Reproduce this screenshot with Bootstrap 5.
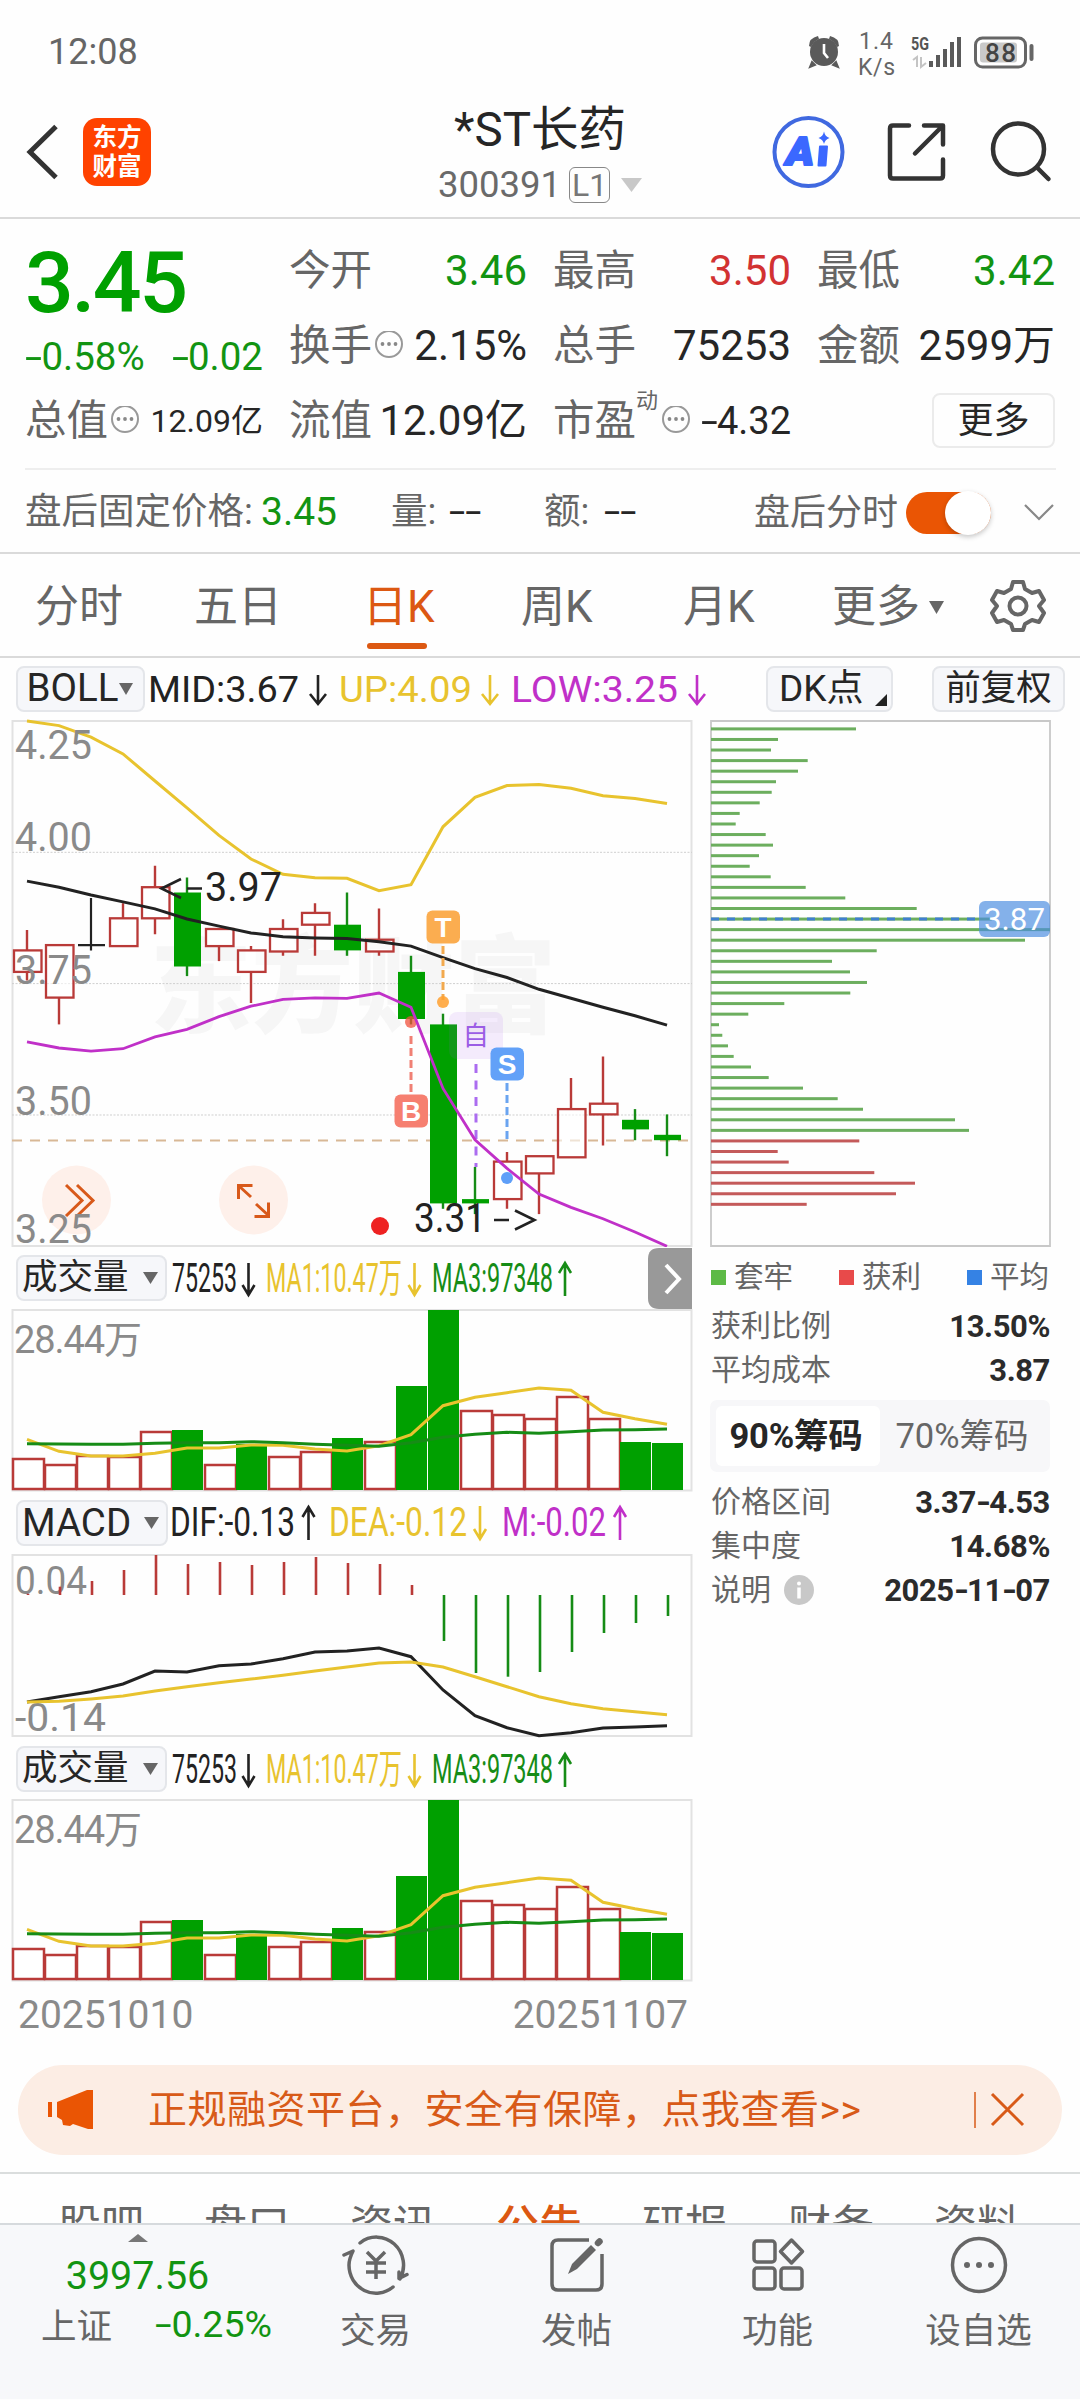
<!DOCTYPE html>
<html lang="zh-CN">
<head>
<meta charset="utf-8">
<meta name="viewport" content="width=device-width, initial-scale=1">
<title>*ST长药 300391</title>
<link rel="stylesheet" href="https://cdn.jsdelivr.net/npm/bootstrap@5.3.0/dist/css/bootstrap.min.css">
<style>
body{font-family:Roboto,"Noto Sans CJK SC",sans-serif;color:#262626;background:#fefefe;width:1080px;height:2400px;overflow:hidden;line-height:1}
.nw{white-space:nowrap}
.g6{color:#666}.up{color:#d23232}.dn{color:#129412}.or{color:#dc5812}
svg text{font-family:Roboto,"Noto Sans CJK SC",sans-serif}
.hy{display:inline-block;transform:scaleX(1.6);transform-origin:0 50%;margin-right:.15em}
.status{height:104px;padding:0 44px 0 48px}
.clock{font-size:36px;color:#666;letter-spacing:0}
.titlebar{height:115px;border-bottom:2px solid #dadada;padding-bottom:17px;display:grid;grid-template-columns:1fr auto 1fr;grid-template-rows:95px}
.logo{width:68px;height:68px;border-radius:14px;background:#ff4200;color:#fff;font-weight:700;font-size:24.5px;line-height:29px}
.stk{font-size:47.5px;line-height:46px}
.code{font-size:36.5px;color:#6a6a6a;line-height:38px}
.lv{border:1.5px solid #888;border-radius:6px;width:41px;height:36px;font-size:32px;color:#777;line-height:34px}
.quote{height:335px;border-bottom:2px solid #dadada;padding:14px 24px 0 25px}
.qgrid{display:grid;grid-template-columns:repeat(4,238px);column-gap:26px;grid-auto-rows:75px}
.lab{font-size:41.5px;color:#666}
.val{font-size:42px}
.big{font-size:86px;font-weight:500;color:#00a000;letter-spacing:-2.5px}
.btnmore{width:123px;height:55px;border:2px solid #ebebeb;border-radius:8px;font-size:36px}
.after{border-top:2px solid #eee;height:84px;margin-top:10px;font-size:36.5px;padding-top:3px}
.track{width:85px;height:42px;border-radius:21px;background:#ea5504}
.knob{width:46px;height:44px;border-radius:50%;background:#fff;box-shadow:0 2px 5px rgba(0,0,0,.22)}
.periods{height:104px;border-bottom:2px solid #dadada;font-size:44px;color:#666;padding-top:4px}
.periods .bar{width:60px;height:6px;border-radius:3px;background:#dc5812;margin:auto 0 7px 4px}
.indi{height:61px}
.pill{background:#f6f7fa;border:2px solid #e4e6ea;border-radius:8px;height:46px;font-size:35.5px}
.leftcol{width:700px}
.rightcol{width:340px;margin-left:10px}
.legendrow{font-size:29.5px;color:#666;height:57px;padding:4px 1px 0}
.sq{width:15px;height:15px}
.kv{font-size:30px;color:#666;height:44px;padding-left:1px}
.kv b{font-size:31px;color:#2b2b2b;font-weight:700;letter-spacing:-.4px}
.kv .hy{transform:scaleX(1.25);margin-right:.05em}
.seg{height:72px;background:#f7f7f9;border-radius:7px;font-size:34.5px;padding:6px}
.seg .on{width:164px;height:60px;background:#fff;border-radius:6px;font-weight:700;letter-spacing:-.2px;padding-right:4px}
.dates{font-size:39px;color:#8a8a8a;padding:0 12px 4px 18px;height:71px}
.banner{height:90px;margin:12px 18px 0;border-radius:45px;background:#fcede4;font-size:39px;letter-spacing:.5px;color:#d85a18}
.sub{height:51px;margin-top:17px;border-top:2px solid #dadddd;overflow:hidden;font-size:43px;color:#666;padding:30px 0 0 28px}
.sub div{width:146px;line-height:44px}
.foot{height:176px;background:#f7f8fa;border-top:2px solid #d6dadd;font-size:35.5px;color:#666}
.foot .cell{width:201px;padding-top:9px}
.cap{margin-top:18px}
</style>
</head>
<body>
<div class="status d-flex align-items-center">
  <div class="clock">12:08</div>
  <svg class="ms-auto" width="230" height="60" viewBox="806 22 230 60">
    <g fill="#5a5a5a"><circle cx="824" cy="52" r="14"/><path d="M809 46q0-8 9-10l1 3q-5 2-8 8zM839 46q0-8-9-10l-1 3q5 2 8 8z"/><path d="M812 62l-2 5 5-2zM836 62l2 5-5-2z" stroke="#5a5a5a" stroke-width="2"/></g>
    <path d="M824 44v9l4 5" fill="none" stroke="#fff" stroke-width="2.6"/>
    <text x="859" y="49" font-size="23" fill="#666" textLength="34">1.4</text>
    <text x="858" y="75" font-size="23" fill="#666" textLength="37">K/s</text>
    <text x="911" y="50" font-size="18" font-weight="700" fill="#555" textLength="18" lengthAdjust="spacingAndGlyphs">5G</text>
    <path d="M913 60l4-3v10M921 57v10l5-4" fill="none" stroke="#c4c4c4" stroke-width="2"/>
    <g fill="#5a5a5a"><rect x="929" y="61" width="4" height="6"/><rect x="936" y="55" width="4" height="12"/><rect x="943" y="49" width="4" height="18"/><rect x="950" y="42" width="4" height="25"/><rect x="957" y="37" width="4" height="30"/></g>
    <rect x="975.500" y="38" width="50" height="29" rx="7" fill="#fff" stroke="#666" stroke-width="3"/><rect x="980" y="42.500" width="37" height="20" rx="3" fill="#c9c9c9"/>
    <rect x="1029.500" y="44" width="4" height="17" rx="2" fill="#666"/>
    <text x="985" y="62" font-size="26" font-weight="500" fill="#444" textLength="31">88</text>
  </svg>
</div>
<div class="titlebar align-items-center">
  <div class="d-flex align-items-center">
    <svg width="83" height="92" viewBox="0 105.500 83 92"><path d="M56 126L30 151.500 56 177" fill="none" stroke="#333" stroke-width="5"/></svg>
    <div class="logo d-flex flex-column align-items-center justify-content-center"><span>东方</span><span>财富</span></div>
  </div>
  <div class="d-flex flex-column align-items-center pt-2">
    <div class="stk nw">*ST长药</div>
    <div class="d-flex align-items-center" style="margin-top:13px"><span class="code">300391</span><span class="lv text-center ms-2">L1</span>
      <svg class="ms-2" width="24" height="20"><path d="M3 3h21L13.500 17z" fill="#c8c8c8"/></svg></div>
  </div>
  <svg class="ms-auto" width="310" height="92" viewBox="770 105.500 310 92">
    <circle cx="808.500" cy="151.500" r="34" fill="#fff" stroke="#4069e0" stroke-width="4"/>
    <text x="786" y="164" font-size="38" font-weight="900" font-style="italic" fill="#3b68ff" stroke="#3b68ff" stroke-width="2" stroke-linejoin="round" textLength="28" lengthAdjust="spacingAndGlyphs">A</text>
    <path d="M820 146h7l-1.500 19h-7z" fill="#3b68ff" stroke="#3b68ff" stroke-width="2" stroke-linejoin="round"/><path d="M824 131q1 5 5.500 6.500-4.500 1.500-5.500 6-1-4.500-5.500-6 4.500-1.500 5.500-6.500z" fill="#3b68ff"/>
    <g fill="none" stroke="#333" stroke-width="4.500" stroke-linecap="round" stroke-linejoin="round"><path d="M909 125h-16q-3 0-3 3v47q0 3 3 3h47q3 0 3-3v-16M924 125h19v19M942 126l-27 27"/><circle cx="1018.500" cy="148.500" r="25.500"/><path d="M1037 167l11.500 11.500"/></g>
  </svg>
</div>

<div class="quote">
  <div class="qgrid">
    <div class="d-flex align-items-center big"><span class="mt-4">3.45</span></div>
    <div class="d-flex align-items-center justify-content-between"><span class="lab">今开</span><span class="val dn">3.46</span></div>
    <div class="d-flex align-items-center justify-content-between"><span class="lab">最高</span><span class="val up">3.50</span></div>
    <div class="d-flex align-items-center justify-content-between"><span class="lab">最低</span><span class="val dn">3.42</span></div>

    <div class="d-flex align-items-center justify-content-between dn pt-4" style="font-size:38.5px"><span><span class="hy">-</span>0.58%</span><span><span class="hy">-</span>0.02</span></div>
    <div class="d-flex align-items-center"><span class="lab">换手</span><svg width="32" height="30" viewBox="-17 -13 32 30"><use href="#more"/></svg><span class="val ms-auto">2.15%</span></div>
    <div class="d-flex align-items-center justify-content-between"><span class="lab">总手</span><span class="val">75253</span></div>
    <div class="d-flex align-items-center justify-content-between"><span class="lab">金额</span><span class="val nw">2599万</span></div>

    <div class="d-flex align-items-center"><span class="lab">总值</span><svg width="32" height="30" viewBox="-17 -13 32 30"><use href="#more"/></svg><span class="ms-auto nw" style="font-size:32px">12.09亿</span></div>
    <div class="d-flex align-items-center justify-content-between"><span class="lab">流值</span><span class="val nw">12.09亿</span></div>
    <div class="d-flex align-items-center"><span class="lab">市盈</span><span class="g6 align-self-start" style="font-size:22px;padding-top:7px">动</span><svg width="32" height="30" viewBox="-18 -13 32 30"><use href="#more"/></svg><span class="ms-auto" style="font-size:38px"><span class="hy">-</span>4.32</span></div>
    <div class="d-flex align-items-center justify-content-end"><div class="btnmore d-flex align-items-center justify-content-center">更多</div></div>
  </div>
  <div class="after d-flex align-items-center">
    <span class="g6 nw" style="width:236px">盘后固定价格:</span><span class="dn" style="width:130px;font-size:39px">3.45</span>
    <span class="g6" style="width:58px">量:</span><span style="width:95px"><span class="hy">--</span></span>
    <span class="g6" style="width:60px">额:</span><span><span class="hy">--</span></span>
    <span class="g6 nw ms-auto" style="font-size:36px">盘后分时</span>
    <div class="track d-flex align-items-center justify-content-end" style="margin-left:8px"><div class="knob"></div></div>
    <svg width="34" height="24" style="margin-left:31px"><path d="M3 4l14 14 14-14" fill="none" stroke="#888" stroke-width="2.200"/></svg>
  </div>
</div>

<div class="periods d-flex align-items-center">
  <div class="nw" style="width:159px;padding-left:35px">分时</div>
  <div class="nw" style="width:172px;padding-left:35px">五日</div>
  <div class="or nw h-100 d-flex flex-column" style="width:156px;padding-left:32px"><span style="padding-top:27px">日K</span><div class="bar"></div></div>
  <div class="nw" style="width:162px;padding-left:34px">周K</div>
  <div class="nw" style="width:149px;padding-left:34px">月K</div>
  <div class="nw" style="width:190px;padding-left:34px">更多<svg width="28" height="20"><path d="M9 1h15l-7.500 13z" fill="#666"/></svg></div>
  <svg width="60" height="60" viewBox="-30 -29 60 60"><path fill="none" stroke="#666" stroke-width="4" stroke-linejoin="round" d="M-5-24h10l2 7 7 4 7-2 5 9-5 6 5 7-5 9-7-2-7 4-2 6h-10l-2-6-7-4-7 2-5-9 5-7-5-6 5-9 7 2 7-4z"/><circle r="8.500" fill="none" stroke="#666" stroke-width="4"/></svg>
</div>

<div class="indi d-flex align-items-center">
  <div class="pill d-flex align-items-center justify-content-center" style="width:129px;margin-left:16px;font-size:38.500px">BOLL<svg width="16" height="16"><path d="M1 2h14l-7 12z" fill="#666"/></svg></div>
  <svg width="570" height="56" viewBox="145 661 570 56" font-size="37.5"><g id="ind0"></g></svg>
  <div class="pill d-flex align-items-center" style="width:127px;margin-left:51px;padding-left:11px;font-size:37px">DK点<svg class="ms-auto me-1 align-self-end mb-1" width="12" height="12"><path d="M12 0v12H0z" fill="#222"/></svg></div>
  <div class="pill d-flex align-items-center justify-content-center" style="width:133px;margin-left:39px">前复权</div>
</div>

<div class="d-flex">
  <div class="leftcol">
    <svg id="kline" class="d-block" width="700" height="528" viewBox="0 719 700 528"></svg>
    <div class="d-flex align-items-center" style="height:62px;margin-right:8px">
      <div class="pill d-flex align-items-center" style="width:151px;margin-left:16px;padding-left:4px">成交量<svg class="ms-auto me-1" width="18" height="16"><path d="M0 2h15l-7.500 12z" fill="#666"/></svg></div>
      <svg width="481" height="60" viewBox="167 1248 481 60" font-size="40" class="indVol"></svg>
      <svg class="ms-auto" width="44" height="61"><path d="M44 0H11Q0 0 0 11V50Q0 61 11 61H44z" fill="#999"/><path d="M18 17l13 14-13 14" fill="none" stroke="#fff" stroke-width="4"/></svg>
    </div>
    <svg class="vol d-block" width="700" height="183" viewBox="0 1309 700 183"></svg>
    <div class="d-flex align-items-center" style="height:62px">
      <div class="pill d-flex align-items-center" style="width:152px;margin-left:16px;padding-left:4px;font-size:38.500px">MACD<svg class="ms-auto me-1" width="18" height="16"><path d="M0 2h15l-7.500 12z" fill="#666"/></svg></div>
      <svg width="500" height="60" viewBox="168 1493 500 60" font-size="40" id="indMacd"></svg>
    </div>
    <svg id="macd" class="d-block" width="700" height="184" viewBox="0 1554 700 184"></svg>
    <div class="d-flex align-items-center" style="height:61px">
      <div class="pill d-flex align-items-center" style="width:151px;margin-left:16px;padding-left:4px">成交量<svg class="ms-auto me-1" width="18" height="16"><path d="M0 2h15l-7.500 12z" fill="#666"/></svg></div>
      <svg width="481" height="60" viewBox="167 1248 481 60" font-size="40" class="indVol"></svg>
    </div>
    <svg class="vol d-block" width="700" height="183" viewBox="0 1309 700 183"></svg>
    <div class="dates d-flex align-items-center justify-content-between"><span>20251010</span><span>20251107</span></div>
  </div>
  <div class="rightcol">
    <svg id="chips" class="d-block" width="342" height="528" viewBox="710 719 342 528"></svg>
    <div class="legendrow d-flex align-items-center justify-content-between">
      <span class="d-flex align-items-center"><i class="sq me-2" style="background:#5dba46"></i>套牢</span>
      <span class="d-flex align-items-center"><i class="sq me-2" style="background:#e84a4a"></i>获利</span>
      <span class="d-flex align-items-center"><i class="sq me-2" style="background:#3582e4"></i>平均</span>
    </div>
    <div class="kv d-flex align-items-center justify-content-between"><span>获利比例</span><b>13.50%</b></div>
    <div class="kv d-flex align-items-center justify-content-between"><span>平均成本</span><b>3.87</b></div>
    <div class="seg d-flex align-items-center mt-2 mb-2"><div class="on d-flex align-items-center justify-content-center nw">90%筹码</div><div class="flex-fill text-center g6 nw">70%筹码</div></div>
    <div class="kv d-flex align-items-center justify-content-between"><span>价格区间</span><b>3.37<span class="hy">-</span>4.53</b></div>
    <div class="kv d-flex align-items-center justify-content-between"><span>集中度</span><b>14.68%</b></div>
    <div class="kv d-flex align-items-center"><span>说明</span><svg style="margin-left:13px" width="30" height="30"><circle cx="15" cy="15" r="15" fill="#c8c8c8"/><circle cx="15" cy="8.500" r="2" fill="#fff"/><path d="M15 12.500v11" stroke="#fff" stroke-width="3.500"/></svg><b class="ms-auto">2025<span class="hy">-</span>11<span class="hy">-</span>07</b></div>
  </div>
</div>

<div class="banner d-flex align-items-center">
  <svg width="130" height="60" viewBox="18 2080 130 60" fill="#ea5504"><rect x="48" y="2102" width="4" height="15"/><path d="M57 2102l30-12h6v39h-5l-15-5-3 2-7-1-1-5-5-3z"/></svg>
  <span class="nw">正规融资平台，安全有保障，点我查看&gt;&gt;</span>
  <svg class="ms-auto" width="92" height="50" viewBox="970 2085 92 50" stroke="#d85a18" fill="none"><path d="M975 2092v36" stroke-width="1.500"/><path d="M992 2094l31 31M1023 2094l-31 31" stroke-width="3"/></svg>
</div>
<div class="sub d-flex text-center"><div>股吧</div><div>盘口</div><div>资讯</div><div class="or fw-medium">公告</div><div>研报</div><div>财务</div><div>资料</div></div>

<div class="foot d-flex">
  <div style="width:275px;padding-top:9px">
    <svg class="d-block mx-auto" width="24" height="8"><path d="M12 0l10 8H2z" fill="#777"/></svg>
    <div class="dn text-center" style="font-size:39.500px;margin-top:14px">3997.56</div>
    <div class="d-flex justify-content-between" style="padding:0 3px 0 41px;margin-top:14px"><span>上证</span><span class="dn" style="font-size:37.500px;margin-top:-4px"><span class="hy">-</span>0.25%</span></div>
  </div>
  <div class="cell text-center"><svg class="d-block mx-auto" width="70" height="62" viewBox="-35 -31 70 62" fill="none" stroke="#666" stroke-width="3.500" stroke-linecap="round" stroke-linejoin="round"><path d="M-16-22A27 28 0 0 1 24 14M31 9.500l-8 4V7M-32-10l9-4q-4 8-4 14A27 28 0 0 0 17 22"/><path d="M-9-13L0-4 9-13M-10-2h20M-10 7h20M0-4v18" stroke-linecap="butt"/></svg><div class="cap">交易</div></div>
  <div class="cell text-center"><svg class="d-block mx-auto" width="66" height="62" viewBox="-33 -31 66 62" fill="none" stroke="#666" stroke-width="3.500"><path d="M12-25H-19q-6 0-6 6v38q0 6 6 6H19q6 0 6-6V-11"/><path d="M-9 9l4-10L14-20l5 5L0 4z" fill="#666" stroke="none"/><path d="M21-22l1.500-1.500" stroke-width="6.500" stroke-linecap="round"/></svg><div class="cap">发帖</div></div>
  <div class="cell text-center"><svg class="d-block mx-auto" width="66" height="62" viewBox="-33 -31 66 62" fill="none" stroke="#666" stroke-width="3.500" stroke-linejoin="round"><rect x="-24" y="-24" width="21" height="21" rx="3"/><rect x="-24" y="3" width="21" height="21" rx="3"/><rect x="3" y="3" width="21" height="21" rx="3"/><path d="M13.500-25l11 11.500-11 11.500-11-11.500z"/></svg><div class="cap">功能</div></div>
  <div class="cell text-center"><svg class="d-block mx-auto" width="66" height="62" viewBox="-33 -31 66 62"><circle r="26.500" fill="none" stroke="#666" stroke-width="3.500"/><g fill="#666"><circle cx="-12" r="3"/><circle r="3"/><circle cx="12" r="3"/></g></svg><div class="cap">设自选</div></div>
</div>
<svg width="0" height="0"><defs><g id="more"><circle r="13" fill="none" stroke="#999" stroke-width="2"/><circle cx="-6.500" r="1.900" fill="#888"/><circle r="1.900" fill="#888"/><circle cx="6.500" r="1.900" fill="#888"/></g></defs></svg>

<script src="https://cdn.jsdelivr.net/npm/bootstrap@5.3.0/dist/js/bootstrap.bundle.min.js"></script>
<script>
const R='#b93a38',G='#00a000',Y='#e8c32e',K='#222',M='#c030c8',DG='#168c16';
const cx=i=>27+32*i;
const line=(ys,c,w=3)=>`<polyline fill="none" stroke="${c}" stroke-width="${w}" points="${ys.map((y,i)=>cx(i)+','+y).join(' ')}"/>`;
const fit=(x,y,t,c,w)=>`<text x="${x}" y="${y}" fill="${c}" textLength="${w}" lengthAdjust="spacingAndGlyphs">${t}</text>`;
const arrow=(x,y1,y2,c,up,h=6)=>`<path d="M${x} ${y1}V${y2}M${x-h} ${up?y1+10:y2-10}L${x} ${up?y1:y2}L${x+h} ${up?y1+10:y2-10}" fill="none" stroke="${c}" stroke-width="2.6"/>`;
const frame=(t,b)=>`<path d="M12.500 ${t}H691.500V${b}H12.500z" fill="none" stroke="#e2e2e2" stroke-width="2"/>`;

document.getElementById('ind0').innerHTML=
 fit(148,702,'MID:3.67',K,151)+arrow(318,675,704,K,0,8)+fit(339,702,'UP:4.09',Y,133)+arrow(490,675,704,Y,0,8)+fit(511,702,'LOW:3.25',M,167)+arrow(697,675,704,M,0,8);

// price p (yuan) to its height in the 3.25-4.25 chart
const py=p=>+(721+(4.25-p)*525.3).toFixed(1);
// series are stored in steps of 1/490 yuan below 4.25, offset by 720
const q=u=>py(4.25-(u-720)/490);
// [colour, body top, body bottom, high, low]
const candles=[['r',934,954,915,962],['r',929,978,929,1003],['k',929,929,885,934],['r',904,930,890,930],['r',875,904,855,919],['g',880,949,866,958],['r',914,930,914,944],['r',934,954,930,983],['r',914,935,905,939],['r',899,910,890,939],['g',910,934,880,939],['r',924,935,895,939],['g',954,998,939,1003],['g',1003,1170,993,1175],['g',1166,1170,1136,1180],['r',1131,1166,1122,1175],['r',1126,1142,1126,1180],['r',1082,1127,1053,1127],['r',1077,1087,1033,1116],['g',1092,1101,1082,1111],['g',1106,1111,1087,1126]].map(([c,...a])=>[c,...a.map(q)]);
let s=frame(721,1246)+`<text x="150" y="1024" font-size="106" font-weight="900" fill="#f6f6f6" textLength="406" lengthAdjust="spacingAndGlyphs">东方财富</text>`;
for(const p of [4,3.75,3.5]) s+=`<path d="M12 ${py(p)}H692" stroke="#cfcfcf" stroke-dasharray="2 1.500"/>`;
s+=`<path d="M12 1140.500H692" stroke="#d8b896" stroke-width="1.800" stroke-dasharray="10 8"/>`;
s+=`<circle cx="76.500" cy="1200" r="34.500" fill="#fef0ea"/><circle cx="253.500" cy="1200" r="34.500" fill="#fef0ea"/>`;
candles.forEach(([c,t,b,h,l],i)=>{const x=cx(i);
 if(c=='g') s+=`<path d="M${x} ${h}V${l}" stroke="${DG}" stroke-width="2.400"/><rect x="${x-13}" y="${t}" width="27" height="${b-t}" fill="${G}"/>`;
 else if(c=='k') s+=`<path d="M${x} ${h}V${l}M${x-13} ${t}H${x+14}" stroke="${K}" stroke-width="2.200"/>`;
 else s+=`<path d="M${x} ${h}V${t}M${x} ${b}V${l}" stroke="${R}" stroke-width="2.400"/><rect x="${x-13}" y="${t}" width="27.500" height="${b-t}" fill="#fff" fill-opacity=".6" stroke="${R}" stroke-width="2.300"/>`;
});
s+=line([720,724.3,735,750.7,776,801,826.7,848.7,863,866.3,866.7,878.3,872.7,818.7,791.3,780.3,779.3,782.7,789.7,792.3,797].map(q),Y);
s+=line([869.3,875,882.3,888.7,895.3,904.7,911.3,917.7,921.3,922.3,923,926,930,940.7,951,959.3,970.3,978.7,987,995,1003.7].map(q),K);
const low=line([1019.3,1025,1028,1025.7,1014.7,1007.7,995.7,986,979.7,978.3,978.7,973.7,987,1062.7,1110.7,1137.3,1161.3,1173.7,1184.3,1196.7,1210].map(q),M,2.8);
s+=`<g fill="none" stroke="#d8591a" stroke-width="3"><path d="M66 1185l16 15.500-16 15.500M77 1185l16 15.500-16 15.500M251 1197l-12-11M238.500 1199v-13.500h14M256 1204l12 11M254.500 1216.500h14v-14"/></g>`;
s+='<g font-size="40.5">';
[['4.25',758.5],['4.00',851],['3.75',983.5],['3.50',1115],['3.25',1242.5]].forEach(([t,y])=>s+=fit(15,y,t,'#8a8a8a',77));
s+='</g>';
s+=`<path d="M181 879L161.500 888.500 181 898M187 888.500h15" fill="none" stroke="${K}" stroke-width="2.600"/><g font-size="40.5">`+fit(205,901,'3.97',K,77)+`</g>`;
s+=`<g font-size="40.5">`+fit(414,1232,'3.31',K,72)+`</g><path d="M494 1220h15M515 1210.500l19.500 9.500-19.500 9.500" fill="none" stroke="${K}" stroke-width="2.600"/>`;
const tag=(x,y,f,t)=>`<rect x="${x-16.5}" y="${y}" width="33.500" height="33" rx="6" fill="${f}"/><text x="${x}" y="${y+26.5}" font-size="28" font-weight="700" fill="#fff" text-anchor="middle" style="font-family:'Liberation Sans'">${t}</text>`;
s+=`<path d="M443 946V1000" stroke="#f2a94e" stroke-width="3" stroke-dasharray="8 4"/><circle cx="443" cy="1002" r="6" fill="#ffa02f" fill-opacity=".85"/>`+tag(443,910.5,'#fbad50','T');
s+=`<circle cx="411" cy="1022" r="6" fill="#f0503c" fill-opacity=".75"/><path d="M411 1036V1093" stroke="#f08074" stroke-width="3" stroke-dasharray="8 4"/>`+tag(411,1094.5,'#f67f70','B');
s+=`<rect x="449" y="1012" width="54" height="47" rx="8" fill="#a050f0" fill-opacity=".11"/><text x="462.500" y="1045" font-size="26.500" fill="#9b5de5">自</text><path d="M476 1064V1167" stroke="#ab6cf0" stroke-width="3" stroke-dasharray="9 7.500"/>`;
s+=`<path d="M507 1083V1139" stroke="#6aa4f0" stroke-width="3" stroke-dasharray="8 4"/>`+low+`<circle cx="507" cy="1178" r="6" fill="#5f9ff8"/>`+tag(507,1047.5,'#62a1f8','S');
s+=`<circle cx="380" cy="1226" r="9" fill="#ee2222"/>`;
document.getElementById('kline').innerHTML=s;

const tops=[1459,1465,1456,1457,1432,1430,1465,1444,1457,1452,1438,1442,1386,1310,1411,1415,1419,1397,1419,1442,1443];
const green=[5,7,10,12,13,19,20], v=a=>a.map(n=>+(1240+n/3).toFixed(1));
s=frame(1310,1490.5);
tops.forEach((t,i)=>{const x=12+32*i; s+=green.includes(i)?`<rect x="${x}" y="${t}" width="31" height="${1490-t}" fill="${G}"/>`:`<rect x="${x+1}" y="${t}" width="31" height="${1489-t}" fill="#fff" stroke="${R}" stroke-width="2.500"/>`;});
s+=line(v([598,634,648,648,640,624,624,615,616,627,633,617,584,497,472,458,444,451,517,536,553]),Y);
s+=line(v([611,612,613,613,610,608,608,605,608,613,616,619,608,592,583,577,580,575,570,569,567]),DG);
s+=`<text x="14" y="1353" font-size="38" fill="#8a8a8a" textLength="128">28.44万</text>`;
document.querySelectorAll('.vol').forEach(e=>e.innerHTML=s);
s=fit(172,1291.5,'75253',K,65)+arrow(248.5,1263,1295,K,0)+fit(266,1291.5,'MA1:10.47万',Y,136)+arrow(414.5,1263,1295,Y,0)+fit(432,1291.5,'MA3:97348',DG,121)+arrow(565,1263,1296,DG,1);
document.querySelectorAll('.indVol').forEach(e=>e.innerHTML=s);
document.getElementById('indMacd').innerHTML=fit(170,1535.5,'DIF:-0.13',K,125)+arrow(308.5,1507,1540,K,1)+fit(329,1535.5,'DEA:-0.12',Y,138)+arrow(480,1506,1539,Y,0)+fit(502,1535.5,'M:-0.02',M,104)+arrow(620,1507,1540,M,1);

s=frame(1555,1736)+`<text x="15" y="1594" font-size="38" fill="#8a8a8a" textLength="72" lengthAdjust="spacingAndGlyphs">0.04</text><text x="15" y="1731" font-size="38" fill="#8a8a8a" textLength="91" lengthAdjust="spacingAndGlyphs">-0.14</text>`;
v([1061,1040,1023,990,945,972,966,975,966,951,969,972,1035,1203,1299,1310,1296,1236,1179,1149,1128]).forEach((y,i)=>s+=`<path d="M${cx(i)+1} 1595V${y}" stroke="${i<13?R:DG}" stroke-width="2.600"/>`);
s+=line(v([1386,1370,1355,1332,1293,1296,1277,1272,1256,1236,1233,1224,1250,1350,1427,1463,1487,1478,1464,1461,1457]),K);
s+=line(v([1386,1384,1377,1368,1353,1340,1328,1317,1306,1293,1281,1269,1266,1281,1310,1340,1370,1391,1406,1415,1424]),Y);
document.getElementById('macd').innerHTML=s;

const chips=[498,264,243,353,324,258,245,209,149,137,227,249,207,179,242,347,466,680,905,1080,1005,560,426,480,531,481,283,175,87,97,114,131,183,236,339,443,519,795,837,508,263,296,553,675,618,350];
s='<path d="M711 721H1050V1246H711z" fill="none" stroke="#c8c8c8" stroke-width="1.800"/>';
chips.forEach((n,k)=>s+=`<rect x="711" y="${(727.4+10.565*k).toFixed(2)}" width="${((n-63)/3).toFixed(1)}" height="3" fill="${k<39?'#6cae5e':'#c45a5a'}"/>`);
s+='<path d="M711 919H979" stroke="#3f7fd0" stroke-width="3" stroke-dasharray="8 8"/><rect x="979" y="901" width="71" height="36" rx="6" fill="#4a8ce0" fill-opacity=".68"/><g font-size="32">'+fit(984,929.5,'3.87','#fff',61)+'</g>';
document.getElementById('chips').innerHTML=s;
</script>
</body>
</html>
